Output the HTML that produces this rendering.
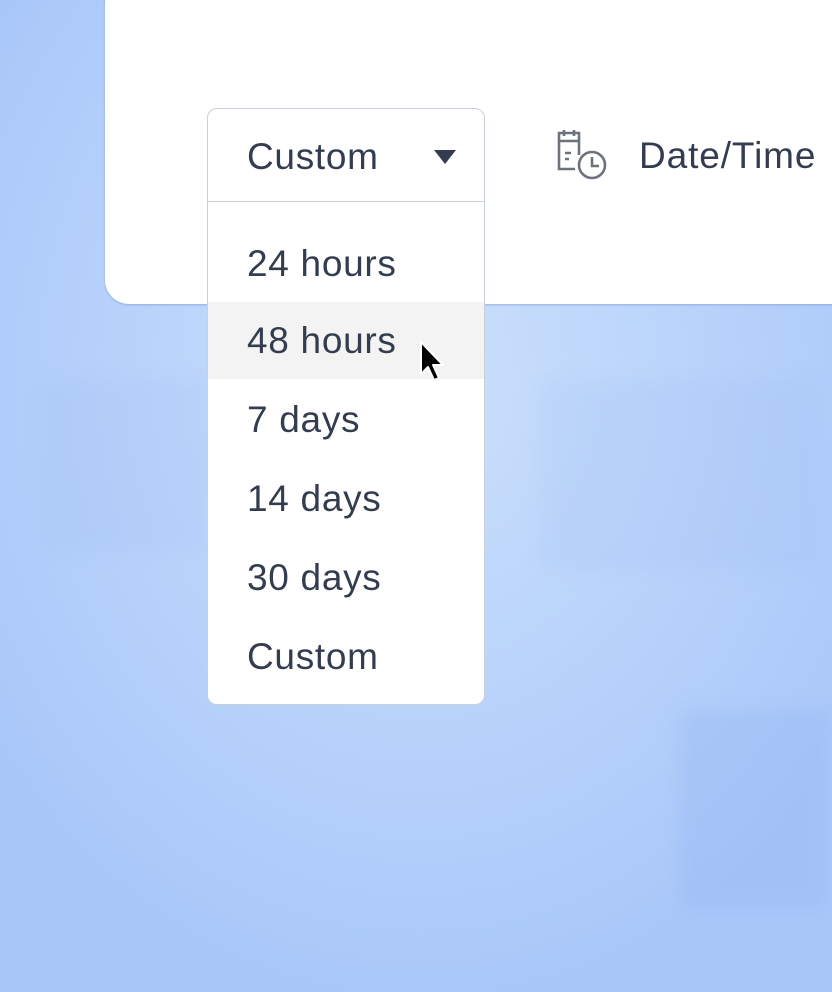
<!DOCTYPE html>
<html><head><style>
html,body{margin:0;padding:0;}
body{width:832px;height:992px;overflow:hidden;position:relative;font-family:"Liberation Sans",sans-serif;
background:radial-gradient(ellipse 520px 620px at 420px 380px,#cbe0fb 0%,#bcd5fb 45%,#a9c7f9 100%);}
.blob{position:absolute;border-radius:16px;background:rgba(150,185,240,0.12);filter:blur(8px);}
.card{position:absolute;left:105px;top:-20px;width:760px;height:324px;background:#fff;border-radius:24px;box-shadow:0 1px 2px rgba(80,110,170,.35);}
.dd{position:absolute;left:207px;top:108px;width:276px;height:595px;background:#fff;border:1px solid #c8d0da;border-radius:10px;overflow:hidden;}
.hdr{height:92px;border-bottom:1px solid #c8d0da;position:relative;}
.t{position:absolute;left:39px;font-size:37px;letter-spacing:0.7px;color:#343d4f;line-height:1;}
.item{position:absolute;left:0;width:276px;height:77px;}
.item .t{top:20px;}
.hl{background:#f3f3f3;}
.tri{position:absolute;left:226px;top:41px;width:0;height:0;border-left:11px solid transparent;border-right:11px solid transparent;border-top:14px solid #343d4f;}
.dt{position:absolute;left:639px;top:137px;font-size:37px;letter-spacing:0.9px;color:#343d4f;line-height:1;}
</style></head><body>
<div class="blob" style="left:40px;top:380px;width:170px;height:170px;"></div>
<div class="blob" style="left:540px;top:380px;width:280px;height:190px;"></div>
<div class="blob" style="left:680px;top:710px;width:150px;height:200px;background:rgba(140,175,240,0.25)"></div>
<div class="card"></div>
<svg style="position:absolute;left:555px;top:130px" width="54" height="52" viewBox="0 0 54 52" fill="none" stroke="#6d737c" stroke-width="2.6">
<path d="M24 25 V3 H4 V39 H20"/><path d="M4 11 H24"/><path d="M9 0 V6 M19 0 V6"/>
<path d="M10 23 H16 M10 29 H14"/>
<circle cx="37" cy="35" r="13"/><path d="M37 27 V36 H44"/>
</svg>
<div class="dt">Date/Time</div>
<div class="dd">
<div class="hdr"><div class="t" style="top:29px">Custom</div><div class="tri"></div></div>
<div class="item" style="top:136px"><div class="t" style="top:0">24 hours</div></div>
<div class="item hl" style="top:193px"><div class="t">48 hours</div></div>
<div class="item" style="top:292px"><div class="t" style="top:0">7 days</div></div>
<div class="item" style="top:371px"><div class="t" style="top:0">14 days</div></div>
<div class="item" style="top:450px"><div class="t" style="top:0">30 days</div></div>
<div class="item" style="top:529px"><div class="t" style="top:0">Custom</div></div>
</div>
<svg style="position:absolute;left:418px;top:340px" width="32" height="50" viewBox="0 0 32 50">
<path d="M3 2 V34 L10 27 L16 40 L21 38 L15 25 H25 Z" fill="#000" stroke="#fff" stroke-width="2" stroke-linejoin="round"/>
</svg>
</body></html>
